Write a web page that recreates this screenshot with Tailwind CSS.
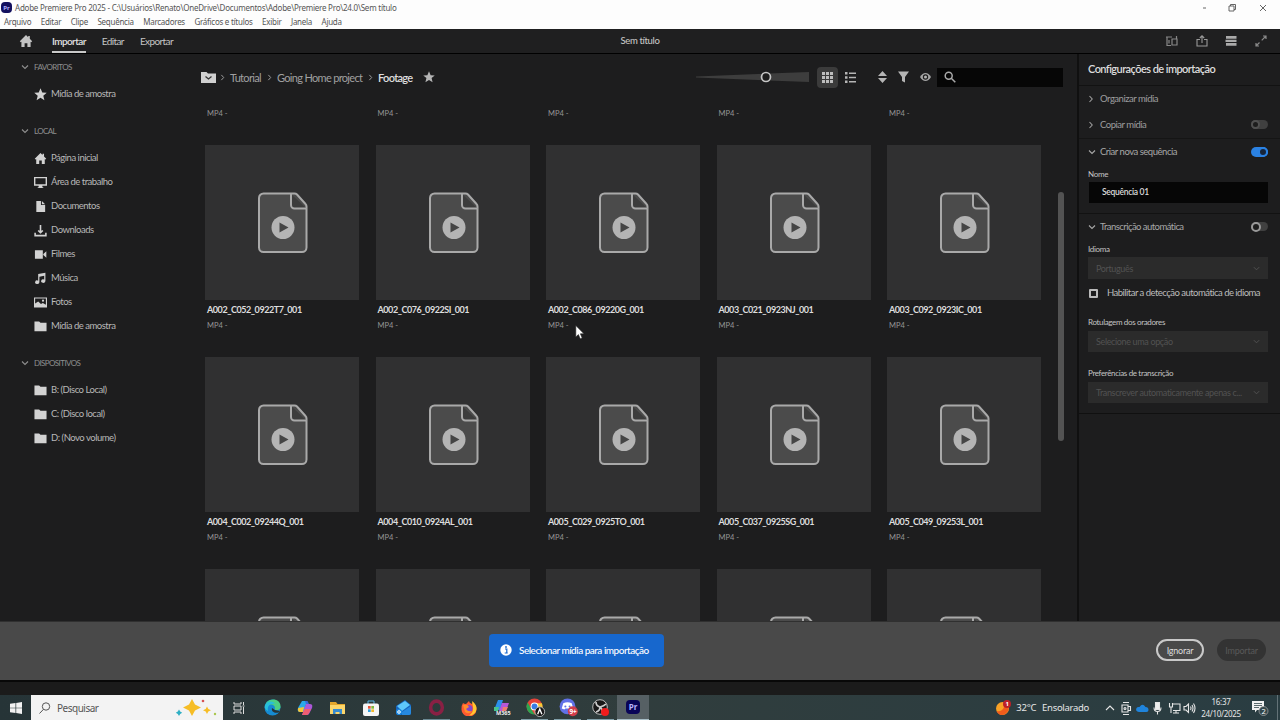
<!DOCTYPE html>
<html lang="pt-BR">
<head>
    <meta charset="UTF-8">
    <meta name="viewport" content="width=device-width, initial-scale=1.0">
    <title>Adobe Premiere Pro 2025</title>
    <script src="https://cdn.jsdelivr.net/npm/@tailwindcss/browser@4"></script>
</head>
<body class="w-[1280px] h-[720px] overflow-hidden bg-[#1d1d1e] font-['Lato','Noto_Sans',sans-serif] text-[#c4c4c4] text-[9.5px] leading-none whitespace-nowrap flex flex-col">

    <!-- icon sprites -->
    <svg class="hidden">
        <symbol id="i-home" viewBox="0 0 14 14"><path fill="currentColor" d="M7 1 .8 7.2 1.8 8.2 2.4 7.7V13h3.2V9.2h2.8V13h3.2V7.7l.6.5 1-1L10.8 4.8V2H9.2v1.3z"/></symbol>
        <symbol id="i-desktop" viewBox="0 0 14 14"><path fill="currentColor" fill-rule="evenodd" d="M0 1h14v9.500H9V12h1v1H4v-1h1v-1.500H0zM1.500 2.500V9h11V2.500z"/></symbol>
        <symbol id="i-doc" viewBox="0 0 14 14"><path fill="currentColor" d="M2.500 1H7.500V5.500H12V13H2.500zM8.500 1 12 4.500H8.500z"/></symbol>
        <symbol id="i-down" viewBox="0 0 14 14"><path fill="none" stroke="currentColor" stroke-width="1.700" d="M7 1v8M4.500 7 7 9.300 9.500 7M1.200 9.500v3h11.600v-3"/></symbol>
        <symbol id="i-film" viewBox="0 0 14 14"><path fill="currentColor" d="M1 2.500h8.500v9H1zM10 6.500 13.300 3.500v7L10 7.600z"/></symbol>
        <symbol id="i-music" viewBox="0 0 14 14"><path fill="currentColor" d="M4.500 2.200 12.300.800V9.800a2.300 1.900 0 1 1-1.300-1.700V4L5.800 5v6a2.300 1.900 0 1 1-1.300-1.700z"/></symbol>
        <symbol id="i-photo" viewBox="0 0 14 14"><path fill="currentColor" fill-rule="evenodd" d="M0 1.500h14v11H0zM1.200 2.700v5.500L4.500 6l3 2.700L9.500 7.500l3.300 2V2.700z"/><circle cx="9.700" cy="5" r="1.200" fill="currentColor"/></symbol>
        <symbol id="i-folder" viewBox="0 0 14 14"><path fill="currentColor" d="M.5 1.500H5.500L7 3h6.500v9H.5z"/></symbol>
        <symbol id="i-star" viewBox="0 0 14 14"><path fill="currentColor" d="m7 .300 1.900 4.600 4.800.3-3.700 3.100 1.200 4.900L7 10.500l-4.200 2.700L4 8.300.300 5.200l4.800-.3z"/></symbol>
        <symbol id="i-chev" viewBox="0 0 8 8"><path fill="none" stroke="currentColor" stroke-width="1.100" d="m1 2.500 3 3 3-3"/></symbol>
        <symbol id="i-right" viewBox="0 0 8 8"><path fill="none" stroke="currentColor" stroke-width="1.100" d="m1.500 1 2.700 3-2.700 3"/></symbol>
        <symbol id="i-clip" viewBox="0 0 50 62">
            <path fill="#4b4b4b" stroke="#a9a9a9" stroke-width="2" d="M5.500 1.500h31q1.500 0 2.500 1l8.500 9.500q1 1 1 2.500v41a4.500 4.500 0 0 1-4.500 4.500h-38.500a4.500 4.500 0 0 1-4.500-4.500v-49.500a4.500 4.500 0 0 1 4.500-4.500z"/>
            <path fill="#3c3c3c" stroke="#a9a9a9" stroke-width="2" d="M33 2v11a3.500 3.500 0 0 0 3.500 3.500h12"/>
            <circle cx="25" cy="35.500" r="11.500" fill="#b4b4b4"/><path fill="#454545" d="m21.500 30.500 9 5-9 5z"/>
        </symbol>
    </svg>

    <header class="h-[29px] bg-[#fdfdfd] text-[#555] shrink-0 font-['Noto_Sans',sans-serif]">
        <div class="h-[15px] flex items-center justify-between">
            <div class="flex items-center gap-[3px] pl-px">
                <span class="size-[11px] rounded-sm bg-[#13105e] text-[#b3b0ff] text-[6px] font-bold flex items-center justify-center">Pr</span>
                <span class="text-[8px] tracking-[-0.23px]">Adobe Premiere Pro 2025 - C:\Usuários\Renato\OneDrive\Documentos\Adobe\Premiere Pro\24.0\Sem título</span>
            </div>
            <svg class="w-[70px] h-[12px] mr-[7px]" viewBox="0 0 70 12" fill="none" stroke="#555" stroke-width=".9"><path d="M0 6.500h6M29 4.500h5v5h-5zM30.500 4.500V3h5v5H34M60 3.500l6 6M66 3.500l-6 6" transform="translate(-3 -.5)"/></svg>
        </div>
        <nav class="h-[14px] flex items-center pl-1 gap-[9.5px] text-[8px] tracking-[-0.27px]">
            <span>Arquivo</span><span>Editar</span><span>Clipe</span><span>Sequência</span><span>Marcadores</span><span>Gráficos e títulos</span><span>Exibir</span><span>Janela</span><span>Ajuda</span>
        </nav>
    </header>

    <div class="h-[25px] shrink-0 bg-[#1f1f20] border-b border-black grid grid-cols-3 items-center">
        <div class="flex items-center h-full pl-[19px] text-[10px] tracking-[-0.6px]">
            <svg class="size-[14px] mr-[19px]"><use href="#i-home"/></svg>
            <span class="h-full flex items-center pt-px border-b-2 border-[#c8c8c8] font-semibold text-[#e0e0e0] mr-4">Importar</span>
            <span class="mr-4">Editar</span><span>Exportar</span>
        </div>
        <div class="text-center text-[9.5px] font-medium tracking-[-0.35px]">Sem título</div>
        <div class="flex justify-end gap-[17.5px] pr-[13px]">
            <svg class="size-3" viewBox="0 0 12 12" fill="none" stroke="#888" stroke-width="1.200"><path d="M0 2h6M1 2v8.500h4M3 5v3.500M6 4h5v6H6zM10.500 1v3"/></svg>
            <svg class="size-3" viewBox="0 0 12 12" fill="none" stroke="#999" stroke-width="1.100"><path d="M4 4.500H1v6.500h10V4.500H8M6 8V1M3.800 3 6 .8 8.200 3"/></svg>
            <svg class="size-3" viewBox="0 0 12 12" fill="#aaa"><path d="M1 1h10.500v2.700H1zM.5 4.700h11V7H.5zM1 8h10.500v2.700H1z"/></svg>
            <svg class="size-3" viewBox="0 0 12 12" fill="none" stroke="#8a8a8a" stroke-width="1.200"><path d="M8 1h3v3M11 1 6.700 5.300M4 11H1V8M1 11l3.500-3.500"/></svg>
        </div>
    </div>

    <div class="flex h-[567px] shrink-0">
        <aside id="sidebar" class="w-[190px] shrink-0 tracking-[-0.48px]"></aside>

        <main class="w-[887px] shrink-0 flex flex-col relative">
            <div class="h-[46px] shrink-0 flex items-center pl-[11px] pr-[14px] text-[11px] tracking-[-0.68px] text-[#a0a0a0]">
                <svg class="w-[15px] h-[13px]" viewBox="0 0 15 13"><path fill="#d0d0d0" d="M0 1h5.500L7 2.500h8V12H0z"/><path d="m4.500 5.500 3 2.500 3-2.500" fill="none" stroke="#333" stroke-width="1.300"/></svg>
                <svg class="size-[7px] ml-[4px] mr-[3px]"><use href="#i-right"/></svg><span class="w-[31px]">Tutorial</span>
                <svg class="size-[7px] ml-[6px] mr-[3px]"><use href="#i-right"/></svg><span class="w-[85px]">Going Home project</span>
                <svg class="size-[7px] ml-[6px] mr-[3px]"><use href="#i-right"/></svg><span class="text-[#dedede] font-semibold w-[35px]">Footage</span>
                <svg class="size-[12px] ml-[10px] text-[#b5b5b5]"><use href="#i-star"/></svg>
                <svg class="w-[113px] h-[12px] ml-auto" viewBox="0 0 113 12"><path fill="#3d3d3d" d="M0 5.500 113 1v10L0 6.500z"/><circle cx="70" cy="6" r="4.500" fill="#1d1d1d" stroke="#c5c5c5" stroke-width="1.700"/></svg>
                <div class="w-[21px] h-[21px] ml-2 bg-[#3b3b3b] rounded-sm flex items-center justify-center">
                    <svg class="size-[11px]" viewBox="0 0 11 11" fill="#bdbdbd"><path d="M0 0h3v3H0zM4 0h3v3H4zM8 0h3v3H8zM0 4h3v3H0zM4 4h3v3H4zM8 4h3v3H8zM0 8h3v3H0zM4 8h3v3H4zM8 8h3v3H8z"/></svg>
                </div>
                <svg class="size-[11px] ml-[7px]" viewBox="0 0 11 11" fill="#b5b5b5"><path d="M0 0h2.500v2.500H0zM4 .500h7V2H4zM0 4.200h2.500v2.500H0zM4 4.700h7v1.500H4zM0 8.500h2.500V11H0zM4 9h7v1.500H4z"/></svg>
                <svg class="w-[9px] h-[12px] ml-[22px]" viewBox="0 0 9 12" fill="#b5b5b5"><path d="M4.500 0 9 5H0zM0 7h9l-4.500 5z"/></svg>
                <svg class="w-[11px] h-[12px] ml-[11px]" viewBox="0 0 11 12" fill="#b5b5b5"><path d="M0 .500h11L7 6v5.500l-3-1.500V6z"/></svg>
                <svg class="w-[11px] h-[10px] ml-[11px]" viewBox="0 0 11 10"><path fill="#a5a5a5" d="M0 5c3-5.300 8-5.300 11 0-3 5.300-8 5.300-11 0z"/><circle cx="5.500" cy="5" r="2.700" fill="#1d1d1d"/><circle cx="5.500" cy="5" r="1.500" fill="#b5b5b5"/></svg>
                <div class="w-[126px] h-[19px] ml-[6px] bg-[#060606] flex items-center pl-[7px]">
                    <svg class="size-[12px]" viewBox="0 0 12 12" fill="none" stroke="#aaa" stroke-width="1.500"><circle cx="4.700" cy="4.700" r="3.500"/><path d="m7.300 7.300 4 4"/></svg>
                </div>
            </div>
            <div class="flex-1 overflow-hidden">
                <div id="grid" class="pl-[15px] grid grid-cols-[repeat(5,170.5px)]"></div>
            </div>
            <div class="absolute left-[868px] top-[138px] w-[6px] h-[249px] rounded-sm bg-[#535353]"></div>
            <svg class="absolute left-[385px] top-[271px] w-[10px] h-[15px]" viewBox="0 0 10 15"><path d="M.8.500v11.500l2.600-2.400 1.800 4.200 2-.8-1.800-4.200H9z" fill="#fff" stroke="#222" stroke-width=".6"/></svg>
        </main>

        <section class="flex-1 min-w-0 border-l-2 border-[#101010] tracking-[-0.48px] [&>div]:pl-[9px] [&>div]:pr-[12px]">
            <div class="h-[32px] flex items-center pb-[3px] border-b border-[#121212] text-[11px] text-[#dcdcdc] font-semibold tracking-[-0.56px]">Configurações de importação</div>
            <div class="h-[25px] flex items-center text-[#9e9e9e]"><svg class="size-[8px] mr-[4px]"><use href="#i-right"/></svg>Organizar mídia</div>
            <div class="h-[28px] flex items-center text-[#9e9e9e] border-b border-[#151515]"><svg class="size-[8px] mr-[4px]"><use href="#i-right"/></svg>Copiar mídia
                <span class="w-[17px] h-[9px] rounded-full bg-[#404040] ml-auto flex items-center"><i class="size-[9px] rounded-full bg-[#1d1d1d] border-2 border-[#505050]"></i></span></div>
            <div class="h-[25px] flex items-center text-[#a8a8a8]"><svg class="size-[8px] mr-[4px]"><use href="#i-chev"/></svg>Criar nova sequência
                <span class="w-[17px] h-[10px] rounded-full bg-[#2b82e3] ml-auto flex items-center justify-end"><i class="size-[10px] rounded-full bg-[#17253a] border-2 border-[#2b82e3]"></i></span></div>
            <div class="h-[50px] pt-[5px] border-b border-[#121212] text-[8px] tracking-[-0.3px]">
                <p class="pt-px">Nome</p>
                <p class="mt-[4px] ml-px h-[21px] bg-[#060606] text-[#dadada] font-semibold flex items-center pl-[13px] text-[8.5px]">Sequência 01</p>
            </div>
            <div class="h-[25px] flex items-center text-[#a8a8a8]"><svg class="size-[8px] mr-[4px]"><use href="#i-chev"/></svg><span class="tracking-[-0.55px]">Transcrição automática</span>
                <span class="w-[17px] h-[9px] rounded-full bg-[#404040] ml-auto flex items-center"><i class="size-[10px] rounded-full bg-[#1d1d1d] border-2 border-[#999]"></i></span></div>
            <div class="h-[175px] border-b border-[#101010] text-[8px] tracking-[-0.35px]">
                <p class="pt-[6px]">Idioma</p>
                <p class="mt-[4px] h-[22px] bg-[#2b2b2b] text-[#525252] flex items-center justify-between px-[8px] text-[9px]"><span>Português</span><svg class="size-[7px]"><use href="#i-chev"/></svg></p>
                <p class="h-[28px] flex items-center text-[9.5px] text-[#bcbcbc]"><i class="size-[9px] shrink-0 border-2 border-[#bbb] rounded-[1px] mr-[9px] ml-px"></i><span class="tracking-[-0.52px]">Habilitar a detecção automática de idioma</span></p>
                <p class="mt-[11px]">Rotulagem dos oradores</p>
                <p class="mt-[5px] h-[21px] bg-[#2b2b2b] text-[#525252] flex items-center justify-between px-[8px] text-[9px]"><span>Selecione uma opção</span><svg class="size-[7px]"><use href="#i-chev"/></svg></p>
                <p class="mt-[17px]">Preferências de transcrição</p>
                <p class="mt-[5px] h-[21px] bg-[#2b2b2b] text-[#525252] flex items-center justify-between px-[8px] text-[9px]"><span>Transcrever automaticamente apenas c...</span><svg class="size-[7px] shrink-0"><use href="#i-chev"/></svg></p>
            </div>
        </section>
    </div>

    <footer class="h-[59px] shrink-0 bg-[#494949] border-t border-[#303030] grid grid-cols-[489px_175px_1fr] items-center pb-[2px]">
        <div class="col-start-2 h-[33px] rounded-sm bg-[#1767cd] text-white flex items-center pl-[11px] text-[10px] font-medium tracking-[-0.5px]">
            <svg class="size-[12px] mr-[7px] shrink-0" viewBox="0 0 12 12"><circle cx="6" cy="6" r="5.700" fill="#fff"/><path d="M5 5h1.800v4M4.700 9h3" fill="none" stroke="#1767cd" stroke-width="1.200"/><circle cx="6" cy="3" r=".9" fill="#1767cd"/></svg>
            Selecionar mídia para importação
        </div>
        <div class="flex justify-end pr-[14px] gap-[13px] text-[9px] tracking-[-0.2px]">
            <span class="w-[48px] h-[22px] rounded-full border-2 border-[#c9c9c9] text-[#dcdcdc] flex items-center justify-center">Ignorar</span>
            <span class="w-[49px] h-[22px] rounded-full bg-[#333] text-[#595959] flex items-center justify-center">Importar</span>
        </div>
    </footer>
    <div class="h-[15px] shrink-0 bg-[#1b1b1b] border-t-2 border-[#080808]"></div>

    <!-- taskbar -->
    <div class="h-[25px] shrink-0 bg-linear-to-r from-[#263437] via-[#303d3d] to-[#2a3d42] flex items-center text-[#e6e6e6] font-['Noto_Sans',sans-serif]">
        <div class="w-[31px] flex justify-center"><svg class="size-[12px]" viewBox="0 0 12 12" fill="#f2f2f2"><path d="M0 1.700 5.500 1v4.700H0zM6.200.900 12 0v5.700H6.200zM0 6.300h5.500V11L0 10.300zM6.200 6.300H12V12l-5.800-.900z"/></svg></div>
        <div class="w-[192px] h-full bg-[#f3f3f3] text-[#555] text-[10px] flex items-center pl-[8px]">
            <svg class="size-[12px] mr-[6px]" viewBox="0 0 12 12" fill="none" stroke="#555"><circle cx="7" cy="4.500" r="3.700"/><path d="M4.500 7.300.500 11.500"/></svg>
            <span class="tracking-[-0.5px]">Pesquisar</span>
            <svg class="w-[42px] h-[20px] ml-auto mr-[6px]" viewBox="0 0 42 20"><path fill="#f6bd25" d="m17 1 3 5.500 6 3-6 3-3 5.500-3-5.500-6-3 6-3zM32 8.500l1.300 2.500 2.700 1.300-2.700 1.300L32 16l-1.300-2.400-2.700-1.300 2.700-1.300z"/><path fill="#2eafc4" d="m4 11.500 1.200 2 2 1.200-2 1.200L4 18l-1.200-2.100-2-1.200 2-1.200z"/><circle cx="28" cy="3" r="1.300" fill="#d65353"/><circle cx="40" cy="16" r="1.200" fill="#a9c64d"/></svg>
        </div>
        <div class="flex h-full items-center *:w-[32.8px] *:h-full *:flex *:items-center *:justify-center">
            <div><svg class="size-[12px]" viewBox="0 0 12 12" fill="none" stroke="#ddd"><path d="M1 0v2h7V0M1 4h7v4H1zM1 12v-2h7v2M10.500 0v3M10.500 5v7M9.500 4h2"/></svg></div>
            <div><svg class="size-[17px]" viewBox="0 0 17 17"><circle cx="8.500" cy="8.500" r="8" fill="#168bd2"/><path fill="#4cd083" d="M2 4C7-2 17 0 16.500 8c0 3-4 4-6 2.500 2-4-3-7-8.500-3.500z"/><path fill="#28bfd9" d="M1 6c3-5 9-4 10-1-5-1-8 2-7 7C2 11 0 9 1 6z"/><path fill="#263437" d="M8 9c-1 4 3 5.500 6.500 4.500L16 12l-5-1z"/></svg></div>
            <div><svg class="size-[16px]" viewBox="0 0 16 16"><path fill="#2ba9e8" d="M5 1h5L7 12H3C0 12 .5 9 1.500 7z"/><path fill="#f6c436" d="M1.200 8 7 7 6 12H3C1 12 .5 10 1.200 8z"/><path fill="#ac57d9" d="M9 4h4c3 0 2.500 3 1.500 5l-2 4c-1 2-2 2-4 2H5z"/><path fill="#ef5d71" d="M7.500 9H14l-2 4c-1 2-2 2-4 2H5z"/><path fill="#376bdf" d="M8 1h2.500L12 4H9z"/></svg></div>
            <div><svg class="w-[15px] h-[14px]" viewBox="0 0 15 14"><path fill="#e4a62c" d="M0 1h6l1.500 2H15v4H0z"/><path fill="#fcd66b" d="M0 4h15v9H0z"/><path fill="#378bd0" d="M3 13V8h9v5H9.500v-2h-4v2z"/></svg></div>
            <div><svg class="size-[16px]" viewBox="0 0 16 16"><path fill="none" stroke="#5bb6e6" d="M5 4V1h6v3"/><rect y="3.500" width="16" height="12.500" rx="2" fill="#f5f5f5"/><path fill="#e8543b" d="M5 6h2.700v2.700H5z"/><path fill="#7eb83d" d="M8.300 6H11v2.700H8.300z"/><path fill="#2e9ddb" d="M5 9.300h2.700V12H5z"/><path fill="#f4b829" d="M8.300 9.300H11V12H8.300z"/></svg></div>
            <div><svg class="size-[16px]" viewBox="0 0 16 16"><path fill="#1665bd" d="M1 6 10 0l6 5v8q0 2-2 2H3q-2 0-2-2z"/><path fill="#5ec7fa" d="m2 6 8-5 5 4-8 6z"/><path fill="#2689e0" d="m16 6-9 6v3h7q2 0 2-2z"/><circle cx="4" cy="12" r="3" fill="#1d8ce4"/><circle cx="4" cy="12" r="1.300" fill="none" stroke="#fff"/></svg></div>
            <div><svg class="w-[27px] h-[25px] py-[3px] border-y border-t-transparent border-b-[#6c8a94]" viewBox="0 0 16 16"><ellipse cx="8" cy="8" rx="5.500" ry="6" fill="none" stroke="#892044" stroke-width="3.300"/></svg></div>
            <div><svg class="size-[16px]" viewBox="0 0 16 16"><path fill="#ff5a31" d="M2 3q1 1 3 1l3-3q0 2 3 3l1-2q4 4 3.500 8A7.500 7 0 0 1 .5 9Q.500 5 2 3z"/><path fill="#ffc72f" d="M11 1q5 4 4.500 8A7.500 7 0 0 1 8 15.500Q13 12 12 7z"/><circle cx="8" cy="8.500" r="3.500" fill="#8347cc"/><path fill="#ff8d2b" d="M2 5q5-1 6 2L5 9q2 3 6 2-3 4-7 1z"/></svg></div>
            <div><svg class="w-[19px] h-[18px]" viewBox="0 0 19 18"><path fill="#2b8fec" d="M6 1h5L8 11H2z"/><path fill="#49c48e" d="M2 8h5l-1 4H2z"/><path fill="#b657d6" d="M10 4h7l-3 8H7z"/><path fill="#ef7d6e" d="M11 8h5l-2 4h-4z"/><text x="4" y="16" font-size="5.500" font-weight="bold" fill="#eee">M365</text></svg></div>
            <div><svg class="w-[27px] h-[25px] py-[2px] border-y border-t-transparent border-b-[#82a1ab]" viewBox="-1 0 18 18"><circle cx="8" cy="8" r="7.500" fill="#e5443a"/><path fill="#2da44f" d="M1.500 4.300 7 14l1.500 1.500A7.500 7.500 0 0 1 1.500 4.300z"/><path fill="#f9c832" d="M8 5h7a7.500 7.500 0 0 1-6.500 10.500l3-6z"/><circle cx="8" cy="8" r="3.700" fill="#fff"/><circle cx="8" cy="8" r="2.800" fill="#397de6"/><circle cx="13" cy="13" r="4.600" fill="#161616" stroke="#ddd" stroke-width=".7"/><path d="m11 15.500 2-5 2 5" stroke="#fff" stroke-width="1.300" fill="none"/></svg></div>
            <div><svg class="w-[27px] h-[25px] py-[2px] border-y border-t-transparent border-b-[#82a1ab]" viewBox="-1 0 18 18"><circle cx="8" cy="8" r="7.500" fill="#6171e8"/><path fill="#fff" d="M4 5q4-2 8 0l1.500 5-2.500 1-1-1H6l-1 1-2.500-1z"/><circle cx="6" cy="8" r="1" fill="#6171e8"/><circle cx="10" cy="8" r="1" fill="#6171e8"/><circle cx="13" cy="12.500" r="4.700" fill="#d23d4b"/><text x="9.800" y="15" font-size="6" font-weight="bold" fill="#fff">9+</text></svg></div>
            <div><svg class="w-[27px] h-[25px] py-[3px] border-y border-t-transparent border-b-[#82a1ab]" viewBox="0 0 17 17"><circle cx="8" cy="8" r="7.300" fill="#191919" stroke="#bbb"/><path d="M4 3q0 4 4 5 4-1 6-3M8 8q0 4-4 5M8 8q3 2 2 6" fill="none" stroke="#ccc" stroke-width="1.700"/><circle cx="13" cy="13" r="4" fill="#f01c1c"/></svg></div>
            <div class="bg-[#566064] border-b border-[#a7bdc5]"><span class="size-[14px] bg-[#080457] text-[#b9b4ff] rounded-sm text-[8px] font-bold flex items-center justify-center">Pr</span></div>
        </div>
        <div class="ml-auto flex items-center h-full text-[9.5px] tracking-[-0.3px]">
            <svg class="size-[16px] mr-[5px]" viewBox="0 0 16 16"><circle cx="7.500" cy="8.500" r="6.500" fill="#f8a126"/><path fill="#f05c1c" d="M1.500 11q7 2 9-8.500 4 3 3 8-4 6-9 4-2-1-3-3.500z"/><circle cx="12" cy="4" r="4" fill="#bd2027"/><text x="10.400" y="6.300" font-size="6" font-weight="bold" fill="#fff">1</text></svg>
            <span class="mr-[6px]">32°C</span><span class="mr-[16px]">Ensolarado</span>
            <svg class="w-[91px] h-[14px] mr-[4px]" viewBox="0 0 91 14" fill="none" stroke="#e6e6e6" stroke-width="1.100">
                <path d="m1 9 4-4 4 4"/>
                <path d="M18 1.500h6M17 4h6v7h-6zM23 5.500h2.500v4H23M18 13.500h6"/><circle cx="20" cy="7.500" r="1"/>
                <path d="M34 11q-4-.500-2.500-4 1-1.500 3-1 3-4.500 6 0 3 0 3 3 0 2-2 2z" fill="#1f84dc" stroke="none"/>
                <path d="M50.500 1.500h4v7h-4z" fill="#eee"/><path d="M49 6.500q0 4 3.500 4t3.500-4M52.500 10v3.500"/>
                <path d="M67 3h8v6.500h-7M71 9.500V12M68 12h6M64.500 2v4h3V2M66 6v6"/>
                <path d="M79 5.500h2L83.500 3v8.500L81 9h-2zM85.500 5.500q1 1.700 0 3.500M87 4q2 3.200 0 6.500M88.500 2.500q3 4.700 0 9.500"/>
            </svg>
            <div class="w-[42px] text-center text-[8px] leading-[12px] mr-[10px]">16:37<br>24/10/2025</div>
            <svg class="w-[17px] h-[16px] mr-[8px]" viewBox="0 0 17 16"><path fill="#f1f1f1" d="M0 1h12v9H5l-2 2.500V10H0z"/><path d="M2 3.500h8M2 5.500h8M2 7.500h5" stroke="#34474b" stroke-width=".8"/><circle cx="11.500" cy="11" r="4.500" fill="#34474b" stroke="#aaa" stroke-width=".7"/><text x="9.600" y="13.800" font-size="7.500" fill="#fff">2</text></svg>
            <div class="h-full w-px bg-[#637277] mr-[2px]"></div>
        </div>
    </div>

    <script>
        const groups = [
            { name: 'FAVORITOS', top: 'pt-0', items: [['star', 'Mídia de amostra']] },
            { name: 'LOCAL', top: 'pt-[11px]', items: [['home', 'Página inicial'], ['desktop', 'Área de trabalho'], ['doc', 'Documentos'], ['down', 'Downloads'], ['film', 'Filmes'], ['music', 'Música'], ['photo', 'Fotos'], ['folder', 'Mídia de amostra']] },
            { name: 'DISPOSITIVOS', top: 'pt-[11px]', items: [['folder', 'B: (Disco Local)'], ['folder', 'C: (Disco local)'], ['folder', 'D: (Novo volume)']] }
        ];
        document.getElementById('sidebar').innerHTML = groups.map(g => `
            <div class="${g.top}">
                <div class="h-[28px] pb-[2px] flex items-center text-[8px] text-[#8f8f8f] tracking-[-0.6px] pl-[21px]"><svg class="size-[8px] mr-[5px]"><use href="#i-chev"/></svg>${g.name}</div>
                ${g.items.map(([icon, text]) => `<div class="h-[24px] flex items-center pl-[34px] text-[#b8b8b8]"><svg class="size-[13px] mr-[4px] text-[#d2d2d2]"><use href="#i-${icon}"/></svg>${text}</div>`).join('')}
                <div class="h-px"></div>
            </div>`).join('');

        const clips = [
            'A002_C052_0922T7_001', 'A002_C076_0922SI_001', 'A002_C086_09220G_001', 'A003_C021_0923NJ_001', 'A003_C092_0923IC_001',
            'A004_C002_09244Q_001', 'A004_C010_0924AL_001', 'A005_C029_0925TO_001', 'A005_C037_0925SG_001', 'A005_C049_09253L_001'
        ];
        const meta = '<div class="h-[45px] pl-[2px] pt-[10px] text-[7.5px] text-[#969696] tracking-normal">MP4 -</div>';
        const thumb = '<div class="w-[154px] h-[155px] bg-[#303031] flex items-center justify-center"><svg class="w-[50px] h-[62px] ml-[2px]"><use href="#i-clip"/></svg></div>';
        document.getElementById('grid').innerHTML = meta.repeat(5) + clips.map(name => `
            <div class="h-[212px]">
                ${thumb}
                <div class="h-[12px] pl-[2px] pt-[5px] text-[9px] font-bold text-[#dedede] tracking-[-0.43px]">${name}</div>
                ${meta}
            </div>`).join('') + thumb.repeat(5);
    </script>
</body>
</html>
